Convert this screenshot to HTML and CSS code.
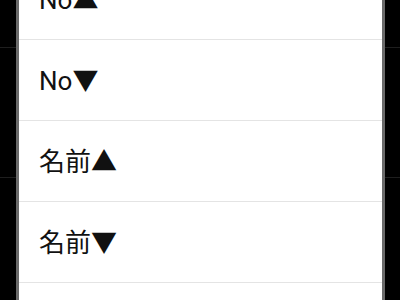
FILE: index.html
```html
<!DOCTYPE html>
<html lang="ja">
<head>
<meta charset="utf-8">
<link rel="stylesheet" href="styles.css">
</head>
<body>
<div class="bg-list">
  <div class="bg-row bg-first"></div>
  <div class="bg-row"></div>
  <div class="bg-row"></div>
</div>
<div class="dialog">
  <div class="option">No▲</div>
  <div class="option">No▼</div>
  <div class="option">名前▲</div>
  <div class="option">名前▼</div>
  <div class="option"></div>
</div>
</body>
</html>
```
FILE: styles.css
```css
html, body {
  margin: 0;
  padding: 0;
  background: #000;
  width: 400px;
  height: 300px;
  overflow: hidden;
  font-family: Roboto, "Noto Sans CJK JP", sans-serif;
}
.bg-list {
  display: flex;
  flex-direction: column;
}
.bg-row {
  height: 129px;
  border-bottom: 1px solid #1e1e1e;
}
.bg-first {
  height: 47px;
}
.dialog {
  position: absolute;
  left: 16px;
  top: -41px;
  width: 363px;
  height: 341px;
  overflow: hidden;
  background: #fff;
  border-left: 3px solid #6a6a6a;
  border-right: 3px solid #6a6a6a;
  display: flex;
  flex-direction: column;
}
.option {
  box-sizing: border-box;
  flex: none;
  height: 81px;
  border-bottom: 1px solid #e4e4e4;
  display: flex;
  align-items: center;
  padding: 0 0 3px 20px;
  font-size: 26px;
  color: #111;
}
```
